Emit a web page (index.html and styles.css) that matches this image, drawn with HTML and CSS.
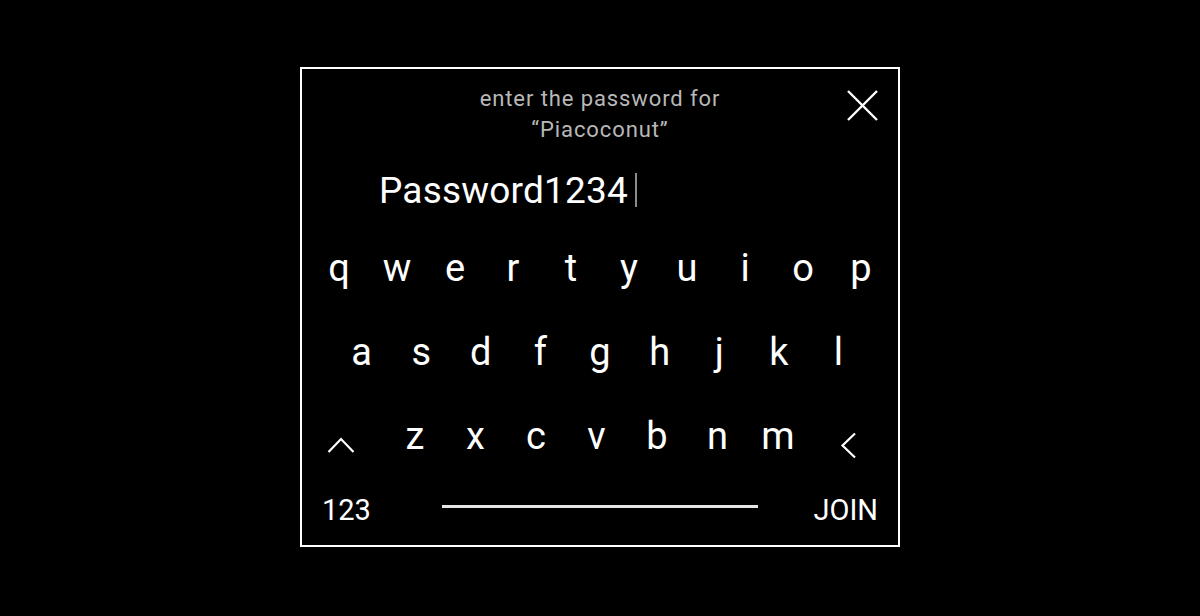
FILE: index.html
```html
<!DOCTYPE html>
<html lang="en">
<head>
    <meta charset="UTF-8">
    <meta name="viewport" content="width=device-width, initial-scale=1.0">
    <title>Wi-Fi Password</title>
    <link rel="stylesheet" href="styles.css">
</head>
<body>
    <div class="dialog">
        <div class="header">
            <div></div>
            <p class="title">enter the password for<br>&ldquo;Piacoconut&rdquo;</p>
            <button class="close" aria-label="Close">
                <svg width="31" height="31" viewBox="0 0 31 31">
                    <path d="M1 1 L30 30 M30 1 L1 30" stroke="#fff" stroke-width="2.4" fill="none"/>
                </svg>
            </button>
        </div>

        <div class="field">
            <span class="value">Password1234</span><span class="cursor"></span>
        </div>

        <div class="keys">
            <div class="row">
                <span class="key">q</span><span class="key">w</span><span class="key">e</span><span class="key">r</span><span class="key">t</span><span class="key">y</span><span class="key">u</span><span class="key">i</span><span class="key">o</span><span class="key">p</span>
            </div>
            <div class="row row2">
                <span class="key">a</span><span class="key">s</span><span class="key">d</span><span class="key">f</span><span class="key">g</span><span class="key">h</span><span class="key">j</span><span class="key">k</span><span class="key">l</span>
            </div>
            <div class="row row3">
                <span class="key shift">
                    <svg width="28" height="16" viewBox="0 0 28 16">
                        <path d="M1.5 15 L14 2 L26.5 15" stroke="#fff" stroke-width="2.2" fill="none"/>
                    </svg>
                </span>
                <span class="key">z</span><span class="key">x</span><span class="key">c</span><span class="key">v</span><span class="key">b</span><span class="key">n</span><span class="key">m</span>
                <span class="key back">
                    <svg width="17" height="27" viewBox="0 0 17 27">
                        <path d="M15 1.5 L2.5 13.5 L15 25.5" stroke="#fff" stroke-width="2.2" fill="none"/>
                    </svg>
                </span>
            </div>
        </div>

        <div class="bottom">
            <span class="num">123</span>
            <span class="space"></span>
            <span class="join">JOIN</span>
        </div>
    </div>
</body>
</html>
```

FILE: styles.css
```css
html, body {
    margin: 0;
    padding: 0;
    background: #000;
    height: 616px;
    overflow: hidden;
}
body {
    font-family: Roboto, "Liberation Sans", sans-serif;
    color: #fff;
}
.dialog {
    box-sizing: border-box;
    width: 600px;
    height: 480px;
    margin: 67px auto 0;
    border: 2px solid #fff;
}
.header {
    display: grid;
    grid-template-columns: 1fr auto 1fr;
    padding-top: 14px;
}
.title {
    margin: 0;
    font-size: 22px;
    line-height: 31px;
    letter-spacing: 0.9px;
    color: #b8b8b8;
    text-align: center;
}
.close {
    justify-self: end;
    align-self: start;
    background: none;
    border: none;
    padding: 0;
    margin: 7px 20px 0 0;
    cursor: pointer;
    line-height: 0;
}
.field {
    display: flex;
    align-items: center;
    padding: 22px 0 0 77px;
    height: 46px;
}
.value {
    font-size: 37px;
    letter-spacing: 0.2px;
}
.cursor {
    width: 2px;
    height: 34px;
    margin-left: 7px;
    background: #8c8c8c;
}
.keys {
    padding-top: 13px;
}
.row {
    display: flex;
    justify-content: center;
    height: 84px;
    align-items: center;
}
.key {
    width: 58px;
    text-align: center;
    font-size: 38px;
    line-height: 84px;
}
.row2 .key {
    width: 59.6px;
}
.row3 {
    padding-right: 11px;
}
.row3 .key {
    width: 60.5px;
}
.row3 .shift, .row3 .back {
    display: flex;
    align-items: center;
    justify-content: center;
    height: 84px;
}
.shift {
    margin-right: 14px;
    padding-top: 18px;
}
.back {
    margin-left: 10px;
    padding-top: 18px;
}
.bottom {
    display: flex;
    align-items: center;
    padding: 0 20px;
    margin-top: 15px;
}
.num, .join {
    font-size: 29px;
}
.space {
    flex: 1;
    height: 3px;
    margin: -8px 55px 0 71px;
    background: #e6e6e6;
}
```
